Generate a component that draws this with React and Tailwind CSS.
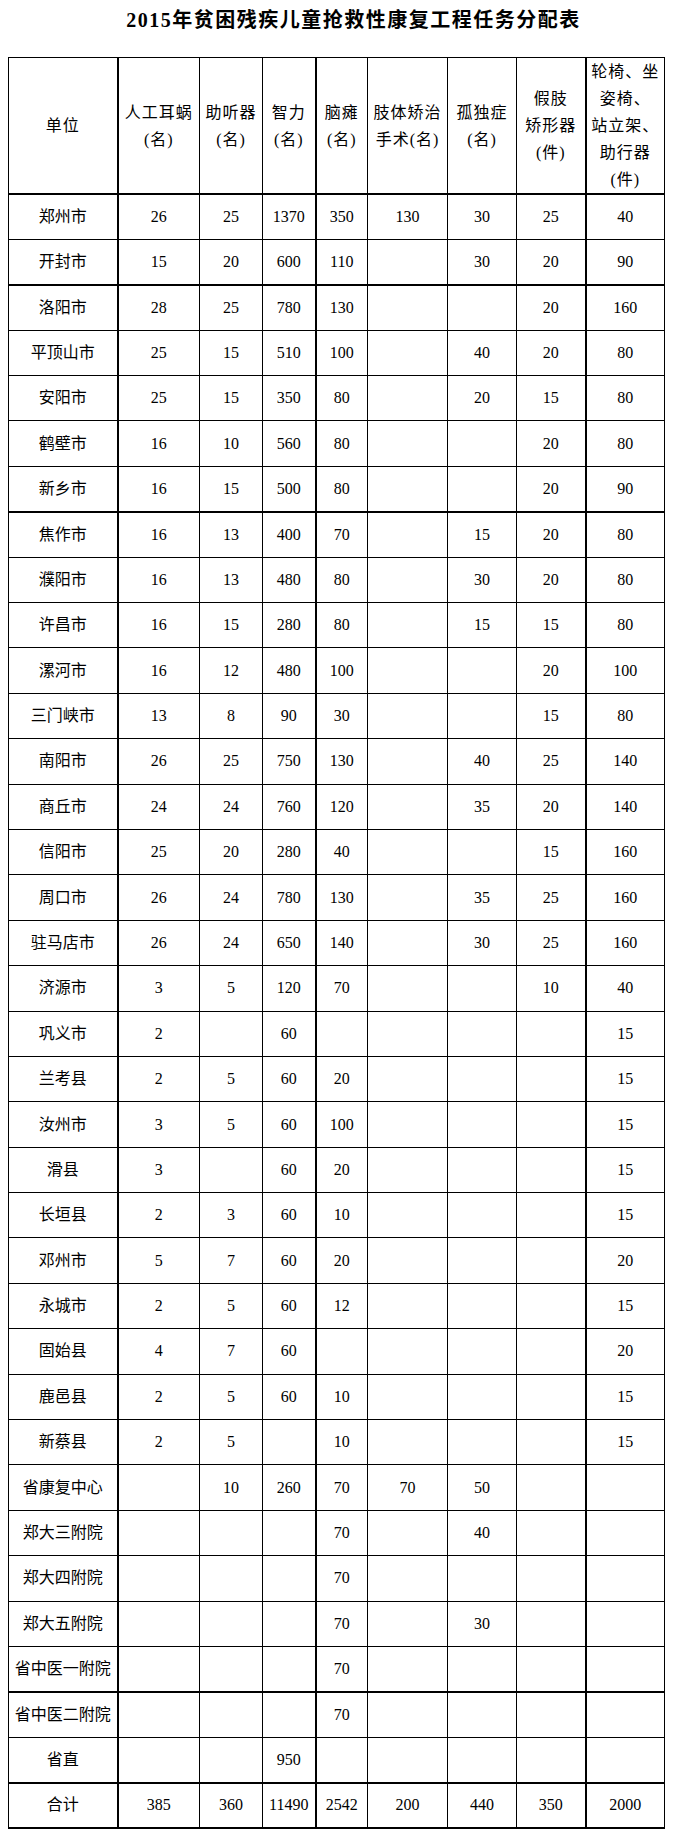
import React from 'react';

// column widths, border to border
const cols = [109, 82, 63, 53, 52, 80, 69, 69, 79];

const headers = [
    ['单位'],
    ['人工耳蜗', '(名)'],
    ['助听器', '(名)'],
    ['智力', '(名)'],
    ['脑瘫', '(名)'],
    ['肢体矫治', '手术(名)'],
    ['孤独症', '(名)'],
    ['假肢', '矫形器', '(件)'],
    ['轮椅、坐', '姿椅、', '站立架、', '助行器', '(件)'],
];

const rows = [
    ['郑州市', '26', '25', '1370', '350', '130', '30', '25', '40'],
    ['开封市', '15', '20', '600', '110', '', '30', '20', '90'],
    ['洛阳市', '28', '25', '780', '130', '', '', '20', '160'],
    ['平顶山市', '25', '15', '510', '100', '', '40', '20', '80'],
    ['安阳市', '25', '15', '350', '80', '', '20', '15', '80'],
    ['鹤壁市', '16', '10', '560', '80', '', '', '20', '80'],
    ['新乡市', '16', '15', '500', '80', '', '', '20', '90'],
    ['焦作市', '16', '13', '400', '70', '', '15', '20', '80'],
    ['濮阳市', '16', '13', '480', '80', '', '30', '20', '80'],
    ['许昌市', '16', '15', '280', '80', '', '15', '15', '80'],
    ['漯河市', '16', '12', '480', '100', '', '', '20', '100'],
    ['三门峡市', '13', '8', '90', '30', '', '', '15', '80'],
    ['南阳市', '26', '25', '750', '130', '', '40', '25', '140'],
    ['商丘市', '24', '24', '760', '120', '', '35', '20', '140'],
    ['信阳市', '25', '20', '280', '40', '', '', '15', '160'],
    ['周口市', '26', '24', '780', '130', '', '35', '25', '160'],
    ['驻马店市', '26', '24', '650', '140', '', '30', '25', '160'],
    ['济源市', '3', '5', '120', '70', '', '', '10', '40'],
    ['巩义市', '2', '', '60', '', '', '', '', '15'],
    ['兰考县', '2', '5', '60', '20', '', '', '', '15'],
    ['汝州市', '3', '5', '60', '100', '', '', '', '15'],
    ['滑县', '3', '', '60', '20', '', '', '', '15'],
    ['长垣县', '2', '3', '60', '10', '', '', '', '15'],
    ['邓州市', '5', '7', '60', '20', '', '', '', '20'],
    ['永城市', '2', '5', '60', '12', '', '', '', '15'],
    ['固始县', '4', '7', '60', '', '', '', '', '20'],
    ['鹿邑县', '2', '5', '60', '10', '', '', '', '15'],
    ['新蔡县', '2', '5', '', '10', '', '', '', '15'],
    ['省康复中心', '', '10', '260', '70', '70', '50', '', ''],
    ['郑大三附院', '', '', '', '70', '', '40', '', ''],
    ['郑大四附院', '', '', '', '70', '', '', '', ''],
    ['郑大五附院', '', '', '', '70', '', '30', '', ''],
    ['省中医一附院', '', '', '', '70', '', '', '', ''],
    ['省中医二附院', '', '', '', '70', '', '', '', ''],
    ['省直', '', '', '950', '', '', '', '', ''],
    ['合计', '385', '360', '11490', '2542', '200', '440', '350', '2000'],
];

// rows whose bottom line is drawn heavier
const thickBottom = [1, 6, 32, 34, 35];
// columns whose right line is drawn heavier
const thickRight = [0, 3, 7];

const App = () => {
    return (
        <div
            className="w-[677px] min-h-[1838px] bg-white text-black"
            style={{ fontFamily: '"Liberation Serif", "Noto Sans CJK SC", serif' }}
        >
            {/* Title */}
            <h1 className="pt-[7px] pl-[30px] text-center text-[20px] leading-[26px] font-bold tracking-[1.5px]">
                2015年贫困残疾儿童抢救性康复工程任务分配表
            </h1>

            {/* Table */}
            <table className="mt-[24px] ml-[8px] w-[656px] table-fixed border-collapse text-[16px]">
                <colgroup>
                    {cols.map((w, i) => (
                        <col key={i} style={{ width: w }} />
                    ))}
                </colgroup>
                <thead>
                    <tr>
                        {headers.map((lines, i) => (
                            <th
                                key={i}
                                className={`h-[136px] border border-black border-b-2 p-0 font-normal leading-[27px] text-center align-middle ${
                                    thickRight.includes(i) ? 'border-r-2' : ''
                                }`}
                            >
                                {lines.map((l, j) => (
                                    <div key={j} className="whitespace-nowrap tracking-[1px]">
                                        {l}
                                    </div>
                                ))}
                            </th>
                        ))}
                    </tr>
                </thead>
                <tbody>
                    {rows.map((row, r) => (
                        <tr key={r}>
                            {row.map((cell, c) => (
                                <td
                                    key={c}
                                    className={`h-[45.4px] border border-black p-0 text-center align-middle whitespace-nowrap ${
                                        thickRight.includes(c) ? 'border-r-2' : ''
                                    } ${thickBottom.includes(r) ? 'border-b-2' : ''}`}
                                >
                                    {cell}
                                </td>
                            ))}
                        </tr>
                    ))}
                </tbody>
            </table>
        </div>
    );
};

export default App;
